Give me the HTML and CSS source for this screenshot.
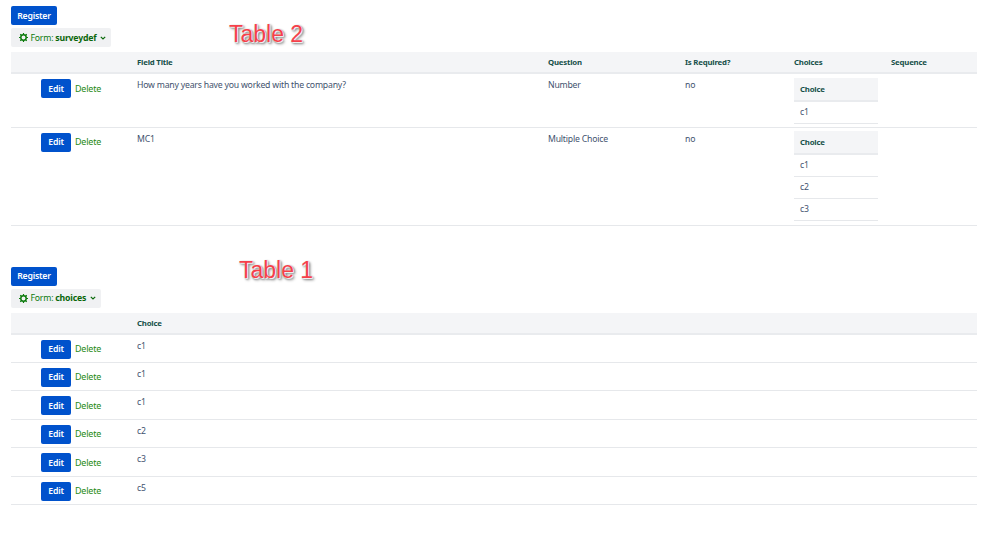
FILE: index.html
```html
<!DOCTYPE html>
<html lang="en">
<head>
<meta charset="utf-8">
<title>Forms</title>
<link rel="stylesheet" href="styles.css">
</head>
<body>
<section class="panel panel-first">
  <span class="note note-two">Table 2</span>
  <button class="btn primary reg">Register</button>
  <button class="btn form-btn">
    <svg class="gear" viewBox="0 0 10 10"><circle cx="5" cy="5" r="3" fill="none" stroke="#0b7a0b" stroke-width="1.6"/><path d="M5 0v2M5 8v2M0 5h2M8 5h2M1.4 1.4l1.4 1.4M7.2 7.2l1.4 1.4M1.4 8.6l1.4-1.4M7.2 2.8l1.4-1.4" stroke="#0b7a0b" stroke-width="1.3"/></svg>
    <span>Form: <b>surveydef</b></span>
    <svg class="chev" viewBox="0 0 6 4"><path d="M.8.8 3 3 5.2.8" fill="none" stroke="#0b6a0b" stroke-width="1.2"/></svg>
  </button>
  <table class="grid">
    <colgroup><col class="c-act"><col class="c-title"><col class="c-q"><col class="c-req"><col class="c-ch"><col></colgroup>
    <thead><tr><th></th><th>Field Title</th><th>Question</th><th>Is Required?</th><th>Choices</th><th>Sequence</th></tr></thead>
    <tbody>
      <tr class="r1">
        <td class="act"><div class="actions"><button class="btn primary edit">Edit</button><a class="del">Delete</a></div></td>
        <td>How many years have you worked with the company?</td><td>Number</td><td>no</td>
        <td class="nest"><table class="inner"><thead><tr><th>Choice</th></tr></thead><tbody><tr><td>c1</td></tr></tbody></table></td><td></td>
      </tr>
      <tr class="r2">
        <td class="act"><div class="actions"><button class="btn primary edit">Edit</button><a class="del">Delete</a></div></td>
        <td>MC1</td><td>Multiple Choice</td><td>no</td>
        <td class="nest"><table class="inner"><thead><tr><th>Choice</th></tr></thead><tbody><tr><td>c1</td></tr><tr><td>c2</td></tr><tr><td>c3</td></tr></tbody></table></td><td></td>
      </tr>
    </tbody>
  </table>
</section>
<section class="panel panel-second">
  <span class="note note-one">Table 1</span>
  <button class="btn primary reg">Register</button>
  <button class="btn form-btn">
    <svg class="gear" viewBox="0 0 10 10"><circle cx="5" cy="5" r="3" fill="none" stroke="#0b7a0b" stroke-width="1.6"/><path d="M5 0v2M5 8v2M0 5h2M8 5h2M1.4 1.4l1.4 1.4M7.2 7.2l1.4 1.4M1.4 8.6l1.4-1.4M7.2 2.8l1.4-1.4" stroke="#0b7a0b" stroke-width="1.3"/></svg>
    <span>Form: <b>choices</b></span>
    <svg class="chev" viewBox="0 0 6 4"><path d="M.8.8 3 3 5.2.8" fill="none" stroke="#0b6a0b" stroke-width="1.2"/></svg>
  </button>
  <table class="grid simple">
    <colgroup><col class="c-act"><col></colgroup>
    <thead><tr><th></th><th>Choice</th></tr></thead>
    <tbody>
      <tr><td class="act"><div class="actions"><button class="btn primary edit">Edit</button><a class="del">Delete</a></div></td><td>c1</td></tr>
      <tr><td class="act"><div class="actions"><button class="btn primary edit">Edit</button><a class="del">Delete</a></div></td><td>c1</td></tr>
      <tr><td class="act"><div class="actions"><button class="btn primary edit">Edit</button><a class="del">Delete</a></div></td><td>c1</td></tr>
      <tr><td class="act"><div class="actions"><button class="btn primary edit">Edit</button><a class="del">Delete</a></div></td><td>c2</td></tr>
      <tr><td class="act"><div class="actions"><button class="btn primary edit">Edit</button><a class="del">Delete</a></div></td><td>c3</td></tr>
      <tr><td class="act"><div class="actions"><button class="btn primary edit">Edit</button><a class="del">Delete</a></div></td><td>c5</td></tr>
    </tbody>
  </table>
</section>
</body>
</html>
```
FILE: styles.css
```css
* { box-sizing: border-box; }
html, body { margin: 0; background: #fff; }
body {
  padding: 6px 22px 0 11px;
  font-family: "Noto Sans", "Open Sans", sans-serif;
  font-size: 8.7px;
  letter-spacing: -0.21px;
  line-height: 12px;
  color: #42526e;
  overflow: hidden;
}
.panel { position: relative; display: flex; flex-direction: column; align-items: flex-start; }
.panel-second { margin-top: 41px; }
.note {
  position: absolute;
  font-family: "Liberation Sans", sans-serif;
  font-size: 23px;
  letter-spacing: 0;
  line-height: 26px;
  color: #f5404a;
  text-shadow: 0 0 1px #fff, 1px 1px 1px #fff, 1px 1px 2px #444, 2px 2px 3px #888;
}
.note-two { left: 218px; top: 15px; }
.note-one { left: 228px; top: -10px; }
.btn {
  border: 0;
  border-radius: 2px;
  height: 19px;
  padding: 0 7px;
  font: inherit;
  letter-spacing: inherit;
  display: inline-flex;
  align-items: center;
}
.primary { background: #0052cc; color: #fff; font-weight: 600; }
.reg { width: 46px; padding: 0; justify-content: center; }
.form-btn {
  margin-top: 3px;
  margin-bottom: 5px;
  background: #f0f1f3;
  color: #0b7a0b;
  gap: 2.5px;
  padding: 0 5px 0 8px;
}
.form-btn b { font-weight: 700; color: #0a660a; }
.gear { width: 9px; height: 9px; }
.chev { width: 6px; height: 4px; margin-left: 1px; }
.grid { width: 966px; border-collapse: collapse; table-layout: fixed; }
.c-act { width: 120px; }
.c-title { width: 411px; }
.c-q { width: 137px; }
.c-req { width: 109px; }
.c-ch { width: 97px; }
.grid > thead > tr > th {
  height: 21px;
  padding: 0 6px;
  background: #f4f5f7;
  border-bottom: 2px solid #e9ebee;
  text-align: left;
  font-size: 7.8px;
  letter-spacing: -0.2px;
  font-weight: 700;
  color: #16504a;
}
.grid > tbody > tr > td {
  padding: 5px 6px;
  vertical-align: top;
  border-bottom: 1px solid #e6e8eb;
}
.r1 { height: 54px; }
.r2 { height: 98px; }
.grid > tbody > tr > td.act { padding: 5px 0 0 30px; }
.actions { display: flex; align-items: center; gap: 4px; }
.edit { padding: 0; height: 19px; width: 30px; justify-content: center; }
.del { color: #1f8a14; font-size: 9px; }
.grid > tbody > tr > td.nest { padding: 4px 6px 0; }
.grid > tbody > .r2 > td.nest { padding-top: 3.5px; }
.inner { width: 84px; border-collapse: collapse; }
.inner th {
  height: 23px;
  padding: 0 6px;
  background: #f4f5f7;
  border-bottom: 2px solid #e9ebee;
  text-align: left;
  font-size: 7.8px;
  letter-spacing: -0.2px;
  font-weight: 700;
  color: #16504a;
}
.inner td { height: 22px; padding: 0 6px; border-bottom: 1px solid #e6e8eb; }
.simple > tbody > tr { height: 28.55px; }
```
